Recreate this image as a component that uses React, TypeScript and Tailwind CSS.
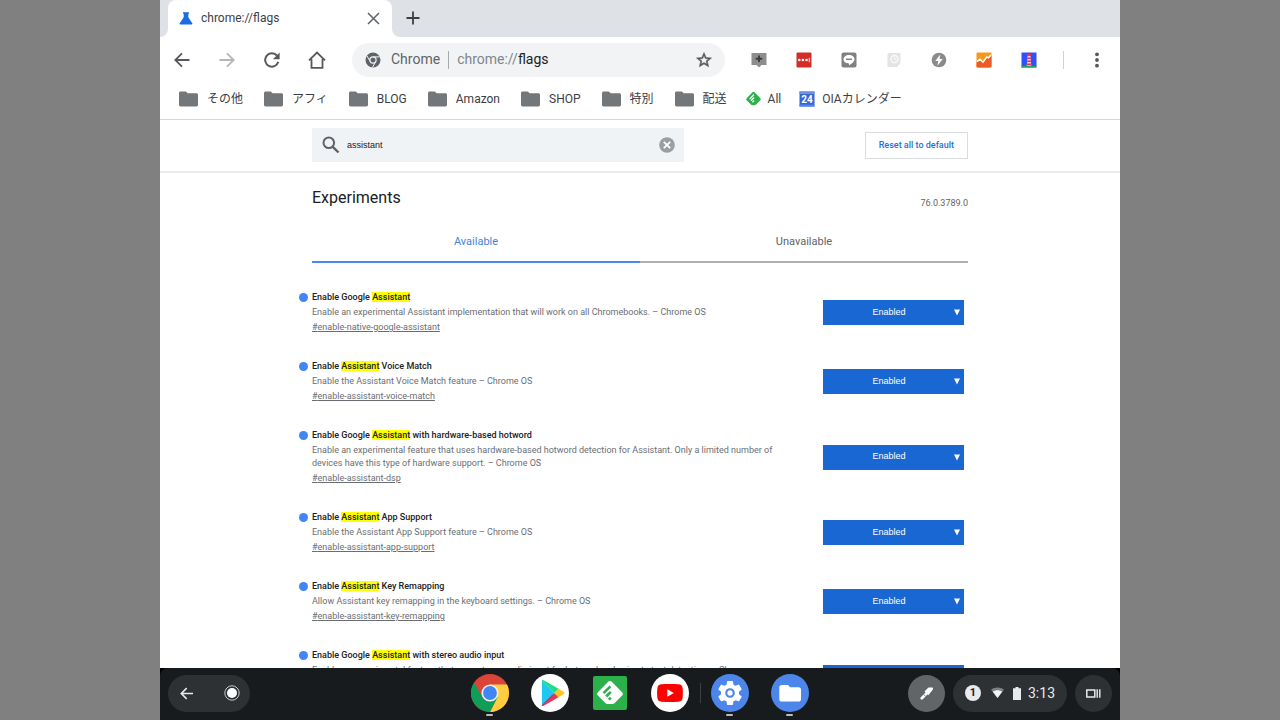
import React, { useState } from "react";

type Flag = {
  before: string;
  after: string;
  description: string;
  id: string;
};

const FLAGS: Flag[] = [
  {
    before: "Enable Google ",
    after: "",
    description:
      "Enable an experimental Assistant implementation that will work on all Chromebooks. – Chrome OS",
    id: "enable-native-google-assistant",
  },
  {
    before: "Enable ",
    after: " Voice Match",
    description: "Enable the Assistant Voice Match feature – Chrome OS",
    id: "enable-assistant-voice-match",
  },
  {
    before: "Enable Google ",
    after: " with hardware-based hotword",
    description:
      "Enable an experimental feature that uses hardware-based hotword detection for Assistant. Only a limited number of devices have this type of hardware support. – Chrome OS",
    id: "enable-assistant-dsp",
  },
  {
    before: "Enable ",
    after: " App Support",
    description: "Enable the Assistant App Support feature – Chrome OS",
    id: "enable-assistant-app-support",
  },
  {
    before: "Enable ",
    after: " Key Remapping",
    description: "Allow Assistant key remapping in the keyboard settings. – Chrome OS",
    id: "enable-assistant-key-remapping",
  },
  {
    before: "Enable Google ",
    after: " with stereo audio input",
    description:
      "Enable an experimental feature that uses stereo audio input for hotword and voice to text detection. – Chrome\nOS",
    id: "enable-assistant-stereo-input",
  },
];

function FolderIcon() {
  return (
    <svg className="h-4 w-[19px]" viewBox="0 0 19 16" fill="#747779">
      <path d="M1.6 0.5h5.2l1.8 1.8h8.8c.9 0 1.6.7 1.6 1.6v9.9c0 .9-.7 1.6-1.6 1.6H1.6c-.9 0-1.6-.7-1.6-1.6V2.1C0 1.200.7.5 1.600.5z" />
    </svg>
  );
}

function FeedlyDiamond() {
  return (
    <svg className="h-4 w-[15px]" viewBox="0 0 16 16">
      <path d="M6.900.9c.6-.6 1.600-.6 2.200 0l6.200 6.300c.6.6.6 1.500 0 2.100L10.500 14.200c-.3.3-.7.5-1.200.5H6.700c-.5 0-.9-.2-1.200-.5L.7 9.300c-.6-.6-.6-1.500 0-2.100z" fill="#2bb24c" />
      <path d="M8 3.800 4.300 7.600M8.200 6.900 5.700 9.400M8.200 10.100 7.300 11" stroke="#fff" strokeWidth="1.500" strokeLinecap="round" />
    </svg>
  );
}

function CalendarIcon() {
  return (
    <svg className="h-4 w-4" viewBox="0 0 15 16">
      <rect width="15" height="15" y="0.500" fill="#3367d6" />
      <rect width="15" height="2.500" y="0.500" fill="#7394dc" />
      <rect width="15" height="2" y="13.500" fill="#4f86ec" />
      <text x="7.500" y="12" textAnchor="middle" fontSize="10" fontWeight="700" fontFamily="Roboto, sans-serif" fill="#fff">24</text>
    </svg>
  );
}

const BOOKMARKS = [
  { label: "その他", icon: <FolderIcon /> },
  { label: "アフィ", icon: <FolderIcon /> },
  { label: "BLOG", icon: <FolderIcon /> },
  { label: "Amazon", icon: <FolderIcon /> },
  { label: "SHOP", icon: <FolderIcon /> },
  { label: "特別", icon: <FolderIcon /> },
  { label: "配送", icon: <FolderIcon /> },
];

const LINE = { fill: "none", strokeWidth: 1.8 } as const;

function ToolButton({ label, children }: { label: string; children: React.ReactNode }) {
  return (
    <button type="button" aria-label={label} className="flex h-full w-[45px] shrink-0 items-center justify-center pr-px">
      {children}
    </button>
  );
}

function TabStrip() {
  return (
    <div className="flex h-[37px] shrink-0">
      <div className="w-2 bg-white">
        <div className="h-full rounded-br-lg bg-[#dee1e6]" />
      </div>
      <div className="w-[224px] bg-[#dee1e6]">
        <div className="flex h-full items-center rounded-t-lg bg-white pr-3 pb-px pl-[11px]">
          <svg className="size-[14px] shrink-0" viewBox="0 0 14 14" fill="#1a6be8">
            <path d="M4 1.200h6v1.500H9.300v3.600l4 6c.4.700 0 1.200-.7 1.200H1.400c-.7 0-1.100-.5-.7-1.200l4-6V2.700H4z" />
          </svg>
          <span className="ml-2 flex-1 text-[12px] text-[#3c4043]">chrome://flags</span>
          <button type="button" aria-label="Close tab">
            <svg className="size-[13px]" viewBox="0 0 13 13" stroke="#5f6368" strokeWidth="1.500">
              <path d="M1 1l11 11M12 1L1 12" />
            </svg>
          </button>
        </div>
      </div>
      <div className="flex-1 bg-white">
        <div className="flex h-full items-center rounded-bl-lg bg-[#dee1e6] pb-px pl-[14px]">
          <button type="button" aria-label="New tab">
            <svg className="size-[14px]" viewBox="0 0 14 14" stroke="#3c4043" strokeWidth="1.800">
              <path d="M7 .5v13M.5 7h13" />
            </svg>
          </button>
        </div>
      </div>
    </div>
  );
}

function Toolbar() {
  return (
    <div className="flex h-[45px] shrink-0 items-center">
      <ToolButton label="Back">
        <svg className="size-4" viewBox="0 0 16 16" stroke="#55595d" {...LINE}>
          <path d="M15.500 8H1.500M8 1.300 1.300 8 8 14.700" />
        </svg>
      </ToolButton>
      <ToolButton label="Forward">
        <svg className="size-4" viewBox="0 0 16 16" stroke="#b4b6b9" {...LINE}>
          <path d="M.5 8h14M8 1.300 14.700 8 8 14.700" />
        </svg>
      </ToolButton>
      <ToolButton label="Reload">
        <svg className="size-4" viewBox="0 0 16 16" stroke="#55595d" {...LINE} strokeWidth="2">
          <path d="M14.300 9.800A6.700 6.700 0 1 1 12.900 3.500" />
          <path d="M15.600.6v6.600H9z" fill="#55595d" stroke="none" />
        </svg>
      </ToolButton>
      <ToolButton label="Home">
        <svg className="size-[18px]" viewBox="0 0 18 18" stroke="#55595d" {...LINE}>
          <path d="M1 9.300 9 1.500l8 7.800M3.500 8v8.800h11V8" />
        </svg>
      </ToolButton>

      <div className="ml-3 flex h-[34px] flex-1 items-center rounded-full bg-[#f1f3f4] pr-3 pl-[13px] text-[14px]">
        <svg className="size-4 shrink-0" viewBox="0 0 16 16">
          <circle cx="8" cy="8" r="7.500" fill="#5f6368" />
          <circle cx="8" cy="8" r="3.100" fill="none" stroke="#f1f3f4" strokeWidth="1.200" />
          <path d="M8 4.900h6.700M5.300 9.600 2 4M10.700 9.600 7.500 15.300" stroke="#f1f3f4" strokeWidth="1" />
        </svg>
        <span className="ml-[10px] text-[#5f6368]">Chrome</span>
        <span className="mr-2 ml-2 h-[18px] w-px bg-[#a6a9ad]" />
        <label htmlFor="address" className="text-[#80868b]">chrome://</label>
        <input id="address" defaultValue="flags" className="w-0 min-w-0 flex-1 bg-transparent text-[#202124] outline-none" />
        <button type="button" aria-label="Bookmark this page">
          <svg className="size-[18px]" viewBox="0 0 24 24" fill="#55595d">
            <path d="M22 9.240l-7.190-.62L12 2 9.190 8.630 2 9.240l5.460 4.730L5.820 21 12 17.270 18.180 21l-1.630-7.030L22 9.240zM12 15.400l-3.760 2.270 1-4.280-3.320-2.880 4.380-.38L12 6.100l1.710 4.040 4.380.38-3.320 2.880 1 4.280L12 15.400z" stroke="#55595d" strokeWidth=".7" />
          </svg>
        </button>
      </div>

      <div className="ml-3 flex h-full">
        <ToolButton label="Add note">
          <svg className="size-4" viewBox="0 0 16 16">
            <path d="M.5 1h15v12H10.500L8 15.600 5.500 13h-5z" fill="#8d8d8d" />
            <path d="M8 3.500v6.500M4.700 6.800h6.600" stroke="#3d3d3d" strokeWidth="2" />
          </svg>
        </ToolButton>
        <ToolButton label="Passwords">
          <svg className="size-4" viewBox="0 0 16 16">
            <rect x=".5" y=".5" width="15" height="15" rx="1" fill="#d32d27" />
            <g fill="#fff"><circle cx="3.300" cy="8" r="1.300" /><circle cx="6.900" cy="8" r="1.300" /><circle cx="10.500" cy="8" r="1.300" /><rect x="12.800" y="5.800" width="1" height="4.500" /></g>
          </svg>
        </ToolButton>
        <ToolButton label="Messages">
          <svg className="size-4" viewBox="0 0 16 16">
            <rect x=".5" y=".5" width="15" height="15" rx="2" fill="#808080" />
            <path d="M8 3c3.200 0 5.500 1.900 5.500 4.300 0 2.500-3 4.500-5.500 6.200v-2C4.800 11.500 2.500 9.700 2.500 7.300S4.800 3 8 3z" fill="#fff" />
            <path d="M5 7.300h6" stroke="#808080" strokeWidth="1.500" />
          </svg>
        </ToolButton>
        <ToolButton label="Saved pages">
          <svg className="size-4" viewBox="0 0 16 16">
            <path d="M2.500 1h12v10l-3.500 4h-9.500V2z" fill="#e4e4e4" />
            <circle cx="8.500" cy="7" r="3.500" fill="none" stroke="#fafafa" strokeWidth="1.300" />
            <path d="M8.500 5v2.300h1.800" fill="none" stroke="#fafafa" />
          </svg>
        </ToolButton>
        <ToolButton label="Quick actions">
          <svg className="size-4" viewBox="0 0 16 16">
            <circle cx="8" cy="8" r="7.300" fill="#8a8a8a" />
            <path d="M9.300 2.500 4.200 9h3.100l-.9 4.800L11.800 7H8.600z" fill="#fff" />
          </svg>
        </ToolButton>
        <ToolButton label="Analytics">
          <svg className="size-4" viewBox="0 0 16 16">
            <rect x=".5" y=".5" width="15" height="15" rx="1" fill="#f7981d" />
            <path d="M.5 10.500 4 8l3 3 4-6 4.500-2v11.500a1 1 0 0 1-1 1h-13a1 1 0 0 1-1-1z" fill="#ee5a24" />
            <path d="M1 9.700 4 7.200l3 3L10.800 5l1.700.8L15 3" fill="none" stroke="#fff" strokeWidth="1.500" />
          </svg>
        </ToolButton>
        <ToolButton label="Lighthouse">
          <svg className="size-4" viewBox="0 0 16 16">
            <rect x=".5" y=".5" width="15" height="15" fill="#304ffe" />
            <rect x=".5" y="13.800" width="15" height="1.700" fill="#1fa85a" />
            <path d="M6.500 4h3l.8 9.800H5.700z" fill="#f8c9d0" />
            <path d="M6 2h4v2H6zM6.300 5.500h3.400v1.600H6.300zM6.100 8.500h3.800v1.600H6.100zM5.900 11.500h4.200v1.600H5.900z" fill="#e53945" />
          </svg>
        </ToolButton>
      </div>
      <span className="mx-[11px] h-[18px] w-px bg-[#cfd1d4]" />
      <ToolButton label="Menu">
        <svg className="size-4" viewBox="0 0 16 16" fill="#55595d">
          <circle cx="8" cy="2.300" r="1.900" /><circle cx="8" cy="8" r="1.900" /><circle cx="8" cy="13.700" r="1.900" />
        </svg>
      </ToolButton>
    </div>
  );
}

function BookmarksBar() {
  return (
    <nav aria-label="Bookmarks" className="flex h-[38px] shrink-0 items-center border-b border-[#d6d8da] pb-1 pl-[19px] text-[12px] text-[#3c4043]">
      <div className="flex gap-[21px]">
        {BOOKMARKS.map((b) => (
          <button type="button" key={b.label} className="flex items-center gap-[9px] whitespace-nowrap">
            {b.icon}
            {b.label}
          </button>
        ))}
      </div>
      <div className="ml-[19px] flex gap-[18px]">
        <a href="#all" className="flex items-center gap-[7px]">
          <FeedlyDiamond />
          All
        </a>
        <a href="#calendar" className="flex items-center gap-[7px] whitespace-nowrap">
          <CalendarIcon />
          OIAカレンダー
        </a>
      </div>
    </nav>
  );
}

function SearchHeader() {
  return (
    <header className="flex h-[53px] shrink-0 justify-center border-b-2 border-[#ebebeb] pb-px">
      <div className="flex w-full max-w-[656px] items-center justify-between">
        <div className="flex h-[34px] w-[372px] items-center bg-[#eff3f6] pr-[9px] pl-[10px]">
          <svg className="size-[18px] shrink-0" viewBox="0 0 18 18" fill="none" stroke="#5f6368" strokeWidth="2">
            <circle cx="6.800" cy="6.800" r="5.300" />
            <path d="M10.800 10.800 16.500 16.500" strokeWidth="2.400" />
          </svg>
          <input
            aria-label="Search flags"
            defaultValue="assistant"
            className="ml-[7px] w-0 min-w-0 flex-1 bg-transparent pt-px font-['Liberation_Sans',sans-serif] text-[9px] text-[#202124] outline-none"
          />
          <button type="button" aria-label="Clear search">
            <svg className="size-4" viewBox="0 0 16 16">
              <circle cx="8" cy="8" r="7.800" fill="#9c9fa1" />
              <path d="M4.800 4.800l6.400 6.400M11.200 4.800l-6.400 6.400" stroke="#fff" strokeWidth="1.800" />
            </svg>
          </button>
        </div>
        <button type="button" className="h-[27px] border border-[#dadce0] px-[13px] pt-px text-[9px] font-medium text-[#1a73d0]">
          Reset all to default
        </button>
      </div>
    </header>
  );
}

function FlagRow({ flag }: { flag: Flag }) {
  return (
    <li className="flex items-center justify-between pr-1">
      <div className="-ml-[13px] w-[500px]">
        <h3 className="flex items-center gap-1 text-[9px] leading-[15px] font-medium text-[#202124]">
          <span className="size-[9px] rounded-full bg-[#4285f4]" />
          <span>
            {flag.before}
            <mark className="bg-[#ffff00] text-inherit">Assistant</mark>
            {flag.after}
          </span>
        </h3>
        <p className="py-px pl-[13px] text-[9px] leading-[13px] whitespace-pre-line text-[#6a6e73]">{flag.description}</p>
        <a href={"#" + flag.id} className="block pl-[13px] text-[9px] leading-[15px] text-[#6a6e73] underline">
          #{flag.id}
        </a>
      </div>
      <div className="relative">
        <select
          aria-label={flag.before + "Assistant" + flag.after}
          defaultValue="Enabled"
          className="block h-[25px] w-[141px] appearance-none bg-[#1967d2] pr-[9px] text-center font-['Liberation_Sans',sans-serif] text-[9px] text-white [text-align-last:center]"
        >
          <option>Default</option>
          <option>Enabled</option>
          <option>Disabled</option>
        </select>
        <svg className="pointer-events-none absolute top-[9px] right-1 h-[7px] w-[6px]" viewBox="0 0 6 7" fill="#fff">
          <path d="M0 .5h6L3 6.500z" />
        </svg>
      </div>
    </li>
  );
}

function FlagsPage() {
  const [tab, setTab] = useState("Available");
  return (
    <main className="flex min-h-0 flex-1 justify-center overflow-hidden">
      <div className="w-full max-w-[656px] pt-[13px]">
        <div className="flex items-start justify-between">
          <h1 className="text-[16px] leading-6 text-[#202124]">Experiments</h1>
          <span className="pt-[11px] text-[9px] leading-[13px] text-[#5f6368]">76.0.3789.0</span>
        </div>
        <div role="tablist" className="mt-[11px] grid grid-cols-2 text-[11px]">
          {["Available", "Unavailable"].map((name) => (
            <button
              key={name}
              type="button"
              role="tab"
              aria-selected={tab === name}
              onClick={() => setTab(name)}
              className={
                tab === name
                  ? "h-[42px] border-b-2 border-[#4a8af0] pt-[2px] text-[#4285d8]"
                  : "h-[42px] border-b-2 border-[#b0b0b0] pt-[2px] text-[#5f6368]"
              }
            >
              {name}
            </button>
          ))}
        </div>
        <ul className="mt-[27px] flex flex-col gap-6">
          {FLAGS.map((flag) => (
            <FlagRow key={flag.id} flag={flag} />
          ))}
        </ul>
      </div>
    </main>
  );
}

function ShelfApp({ label, running, children }: { label: string; running?: boolean; children: React.ReactNode }) {
  return (
    <button type="button" aria-label={label} className="relative flex w-[60px] items-center justify-center">
      {children}
      {running && <span className="absolute -bottom-1 h-[2px] w-[7px] rounded-full bg-[#b9bbbd]" />}
    </button>
  );
}

function Shelf() {
  return (
    <footer className="bg-black">
      <div className="grid h-[52px] grid-cols-[1fr_auto_1fr] items-center rounded-t-lg bg-[#171b1e] px-2 pb-[2px]">
        <div className="flex h-[37px] w-[82px] items-center justify-between rounded-full bg-[#2d3134] pr-[10px] pl-3">
          <button type="button" aria-label="Back">
            <svg className="size-[13px]" viewBox="0 0 13 13" fill="none" stroke="#e8eaed" strokeWidth="1.600">
              <path d="M13 6.500H1.500M6.700 1.100 1.300 6.500l5.400 5.400" />
            </svg>
          </button>
          <button type="button" aria-label="Launcher">
            <svg className="size-4" viewBox="0 0 16 16">
              <circle cx="8" cy="8" r="7.200" fill="none" stroke="#c8cacc" strokeWidth="1" />
              <circle cx="8" cy="8" r="5" fill="#fff" />
            </svg>
          </button>
        </div>

        <div className="flex items-center pr-px">
          <ShelfApp label="Chrome" running>
            <svg className="size-[38px]" viewBox="0 0 38 38">
              <circle cx="19" cy="19" r="19" fill="#db4437" />
              <path d="M19 10.500H36A19 19 0 0 1 19 38L26.400 23.300z" fill="#ffcd40" />
              <path d="M3.100 8.600A19 19 0 0 0 19 38L26.400 23.300 11.600 23.300z" fill="#0f9d58" />
              <circle cx="19" cy="19" r="8.600" fill="#f1f1f1" />
              <circle cx="19" cy="19" r="6.900" fill="#4285f4" />
            </svg>
          </ShelfApp>
          <ShelfApp label="Play Store">
            <svg className="size-[38px]" viewBox="0 0 38 38">
              <circle cx="19" cy="19" r="19" fill="#fff" />
              <path d="M11 6.500v25L23.500 19z" fill="#1fc8f0" />
              <path d="M11 6.500 23.500 19l4-4.200L12.300 6c-.7-.3-1.300 0-1.300.5z" fill="#1fdc8a" />
              <path d="M11 31.500 23.500 19l4 4.200L12.300 32c-.7.300-1.300 0-1.300-.5z" fill="#e8365a" />
              <path d="M27.500 14.800 23.500 19l4 4.200 5-3c1.200-.7 1.200-1.700 0-2.400z" fill="#ffc41f" />
              <path d="M11 31.500 22 20.500" stroke="#6d3a7c" strokeWidth="1" />
            </svg>
          </ShelfApp>
          <ShelfApp label="Feedly">
            <svg className="size-[34px]" viewBox="0 0 34 34">
              <rect width="34" height="34" rx="2" fill="#2bb04a" />
              <path d="M15.200 5.800c1-1 2.600-1 3.600 0l10.300 10.400c1 1 1 2.400 0 3.400L21.500 27.300c-.5.500-1.100.8-1.900.8h-5.200c-.8 0-1.400-.3-1.900-.8L4.900 19.600c-1-1-1-2.400 0-3.400z" fill="#fff" />
              <path d="M17.400 10.300 10.500 17.200M17.800 15.900 13.200 20.500M17.800 21.700 15.900 23.600" stroke="#2bb04a" strokeWidth="2.600" />
            </svg>
          </ShelfApp>
          <ShelfApp label="YouTube">
            <svg className="size-[38px]" viewBox="0 0 38 38">
              <circle cx="19" cy="19" r="19" fill="#fff" />
              <path d="M10.500 10.300c5-.5 12-.5 17 0 2.600.2 3.800 1.400 4.100 3.700.4 3.500.4 6.500 0 10-.3 2.300-1.500 3.500-4.100 3.700-5 .5-12 .5-17 0-2.600-.2-3.800-1.400-4.100-3.700-.4-3.500-.4-6.500 0-10 .3-2.300 1.500-3.500 4.100-3.700z" fill="#f00" />
              <path d="M16.300 15.300v7.400l6.500-3.700z" fill="#fff" />
            </svg>
          </ShelfApp>
          <span className="-mr-px h-5 w-px bg-[#3c4043]" />
          <ShelfApp label="Settings" running>
            <svg className="size-[38px]" viewBox="0 0 38 38">
              <circle cx="19" cy="19" r="19" fill="#4c86ea" />
              <g transform="translate(4.600 4.600) scale(1.200)">
                <path fill="#fff" d="M19.430 12.980c.04-.32.070-.64.070-.98s-.03-.66-.07-.98l2.110-1.650c.19-.15.240-.42.120-.64l-2-3.460c-.12-.22-.39-.3-.61-.22l-2.490 1c-.52-.4-1.080-.73-1.690-.98l-.38-2.650C14.460 2.180 14.250 2 14 2h-4c-.25 0-.46.180-.49.420l-.38 2.650c-.61.250-1.170.59-1.690.98l-2.490-1c-.23-.09-.49 0-.61.220l-2 3.460c-.13.220-.07.490.120.640l2.110 1.650c-.04.320-.07.650-.07.980s.03.660.070.980l-2.110 1.650c-.19.150-.24.420-.12.640l2 3.460c.12.220.39.300.61.220l2.490-1c.52.400 1.080.730 1.690.980l.38 2.650c.03.240.24.420.49.420h4c.25 0 .46-.18.49-.42l.38-2.650c.61-.25 1.170-.59 1.690-.98l2.490 1c.23.090.49 0 .61-.22l2-3.460c.12-.22.070-.49-.12-.64l-2.110-1.650z" />
                <circle cx="12" cy="12" r="3.100" fill="#fff" stroke="#4c86ea" strokeWidth="1.800" />
              </g>
            </svg>
          </ShelfApp>
          <ShelfApp label="Files" running>
            <svg className="size-[38px]" viewBox="0 0 38 38">
              <circle cx="19" cy="19" r="19" fill="#4c86ea" />
              <path d="M10.500 11h6.500l2.200 2.200h8.600c1.200 0 2.200 1 2.200 2.200v10c0 1.200-1 2.200-2.200 2.200H10.500c-1.200 0-2.200-1-2.200-2.200V13.200c0-1.200 1-2.200 2.200-2.200z" fill="#fff" />
            </svg>
          </ShelfApp>
        </div>

        <div className="flex items-center justify-end gap-2">
          <button type="button" aria-label="Stylus tools" className="flex size-[37px] items-center justify-center rounded-full bg-[#626568]">
            <svg className="size-[14px]" viewBox="0 0 14 14">
              <path d="M1.800 12.200 7 7" stroke="#fff" strokeWidth="2.800" strokeLinecap="round" />
              <path d="M4.500 5.500 8.500 1.600h3.700c.6 0 .9.400.9.900-.1 1-.6 1.800-1.300 2.600L8.300 9.300z" fill="#fff" />
              <path d="M3.600 8.300 5.800 10.500" stroke="#626568" strokeWidth=".8" />
            </svg>
          </button>
          <button type="button" aria-label="Status tray, time 3:13" className="flex h-[37px] items-center rounded-full bg-[#2d3134] px-[12px] text-[14px] text-[#e8eaed]">
            <span className="flex size-4 items-center justify-center rounded-full bg-[#e8eaed] text-[11px] font-bold text-[#202124]">1</span>
            <svg className="ml-[10px] h-3 w-[13px]" viewBox="0 0 13 12">
              <path d="M0 2.800C3.700-.3 9.300-.3 13 2.800L6.500 11z" fill="#7c8084" />
              <path d="M1.800 4.800c2.800-2 6.600-2 9.400 0L6.500 11z" fill="#f1f3f4" />
            </svg>
            <svg className="ml-[9px] h-[13px] w-2" viewBox="0 0 8 13">
              <path d="M2.500 0h3v1.300H8V13H0V1.300h2.500z" fill="#e8eaed" />
            </svg>
            <span className="ml-[7px]">3:13</span>
          </button>
          <button type="button" aria-label="Overview" className="flex size-[37px] items-center justify-center rounded-full bg-[#2d3134]">
            <svg className="h-[9px] w-[15px]" viewBox="0 0 15 9">
              <rect x=".8" y="1" width="8" height="7" fill="none" stroke="#e8eaed" strokeWidth="1.500" />
              <path d="M11.200.2v8.600M13.800.2v8.600" stroke="#e8eaed" strokeWidth="1.400" />
            </svg>
          </button>
        </div>
      </div>
    </footer>
  );
}

export default function App() {
  return (
    <div className="h-screen overflow-hidden bg-[#808080] font-[Roboto,'Noto_Sans_CJK_JP',sans-serif]">
      <div className="mx-auto flex h-full w-3/4 flex-col bg-white">
        <TabStrip />
        <Toolbar />
        <BookmarksBar />
        <SearchHeader />
        <FlagsPage />
        <Shelf />
      </div>
    </div>
  );
}
